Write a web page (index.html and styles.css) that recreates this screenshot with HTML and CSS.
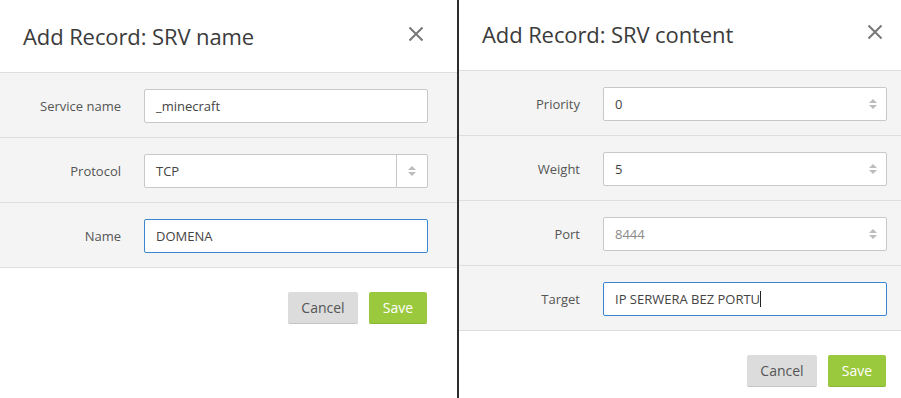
FILE: index.html
```html
<!DOCTYPE html>
<html lang="en">
<head>
  <meta charset="UTF-8" />
  <meta name="viewport" content="width=device-width, initial-scale=1.0" />
  <title>Add Record: SRV</title>
  <link rel="stylesheet" href="styles.css">
</head>
<body>

  <div class="screens">

    <!-- PASO 1: NOMBRE SRV -->
    <div class="modal">
      <div class="modal-header">
        <h2>Add Record: SRV name</h2>
        <button class="close" aria-label="Close">
          <svg width="16" height="16" viewBox="0 0 16 16"><path d="M1.5 1.5L14.5 14.5M14.5 1.5L1.5 14.5" stroke="#777" stroke-width="2" fill="none"/></svg>
        </button>
      </div>
      <div class="modal-body">
        <div class="row">
          <label>Service name</label>
          <div class="field">_minecraft</div>
        </div>
        <div class="row">
          <label>Protocol</label>
          <div class="field select">TCP<span class="select-arrows"><span class="up"></span><span class="down"></span></span></div>
        </div>
        <div class="row">
          <label>Name</label>
          <div class="field focus">DOMENA</div>
        </div>
      </div>
      <div class="modal-footer">
        <button class="btn">Cancel</button>
        <button class="btn btn-save">Save</button>
      </div>
    </div>

    <div class="divider"></div>

    <!-- PASO 2: CONTENIDO SRV -->
    <div class="modal modal-second">
      <div class="modal-header">
        <h2>Add Record: SRV content</h2>
        <button class="close" aria-label="Close">
          <svg width="16" height="16" viewBox="0 0 16 16"><path d="M1.5 1.5L14.5 14.5M14.5 1.5L1.5 14.5" stroke="#777" stroke-width="2" fill="none"/></svg>
        </button>
      </div>
      <div class="modal-body">
        <div class="row">
          <label>Priority</label>
          <div class="field number">0<span class="spin"><span class="up"></span><span class="down"></span></span></div>
        </div>
        <div class="row">
          <label>Weight</label>
          <div class="field number">5<span class="spin"><span class="up"></span><span class="down"></span></span></div>
        </div>
        <div class="row">
          <label>Port</label>
          <div class="field number placeholder">8444<span class="spin"><span class="up"></span><span class="down"></span></span></div>
        </div>
        <div class="row">
          <label>Target</label>
          <div class="field focus">IP SERWERA BEZ PORTU<span class="caret"></span></div>
        </div>
      </div>
      <div class="modal-footer">
        <button class="btn">Cancel</button>
        <button class="btn btn-save">Save</button>
      </div>
    </div>

  </div>

</body>
</html>
```

FILE: styles.css
```css
:root {
  --row-bg: #f4f4f4;
  --line: #dedede;
  --save: #9bc93e;
  --focus: #3a85cf;
}
body {
  margin: 0;
  font-family: "Open Sans", Arial, sans-serif;
  background: #fff;
  overflow: hidden;
}
.screens {
  display: flex;
  height: 398px;
  overflow: hidden;
}
.modal {
  width: 457px;
  flex-shrink: 0;
  background: #fff;
}
.modal-second {
  margin-top: -2px;
}
.divider {
  width: 2px;
  flex-shrink: 0;
  background: #2d2d2d;
}
.modal-header {
  height: 72px;
  display: flex;
  justify-content: space-between;
  align-items: center;
  padding: 0 33px 0 23px;
  border-bottom: 1px solid var(--line);
}
.modal-header h2 {
  margin: 0;
  font-size: 22px;
  font-weight: normal;
  color: #3b3b3b;
  letter-spacing: -0.1px;
}
.close {
  border: 0;
  background: none;
  padding: 0;
  width: 16px;
  height: 16px;
  margin-bottom: 5px;
  display: flex;
}
.row {
  display: flex;
  align-items: center;
  padding: 16px 29px 14px 0;
  background: var(--row-bg);
  border-bottom: 1px solid var(--line);
}
.row label {
  width: 121px;
  margin-right: 23px;
  text-align: right;
  font-size: 13px;
  color: #555;
}
.field {
  flex: 1;
  height: 34px;
  box-sizing: border-box;
  display: flex;
  align-items: center;
  padding: 0 11px;
  background: #fff;
  border: 1px solid #c8c8c8;
  border-radius: 2px;
  font-size: 13px;
  color: #444;
}
.field.focus {
  border-color: var(--focus);
}
.field.placeholder {
  color: #8a8a8a;
}
.field.number {
  justify-content: space-between;
  padding-right: 9px;
}
.select {
  justify-content: space-between;
  padding-right: 0;
}
.select-arrows {
  width: 30px;
  align-self: stretch;
  border-left: 1px solid #c8c8c8;
  display: flex;
  flex-direction: column;
  align-items: center;
  justify-content: center;
  gap: 2px;
}
.spin {
  display: flex;
  flex-direction: column;
  align-items: center;
  gap: 2px;
}
.up, .down {
  width: 0;
  height: 0;
  border-left: 4px solid transparent;
  border-right: 4px solid transparent;
}
.up {
  border-bottom: 4px solid #bcbcbc;
}
.down {
  border-top: 4px solid #bcbcbc;
}
.caret {
  width: 1px;
  height: 16px;
  background: #222;
}
.modal-footer {
  display: flex;
  justify-content: flex-end;
  gap: 11px;
  padding: 24px 30px 0 0;
}
.btn {
  width: 70px;
  height: 32px;
  padding: 0;
  border: 0;
  border-bottom: 1px solid #c4c4c4;
  border-radius: 2px;
  background: #dcdcdc;
  font-family: inherit;
  font-size: 14px;
  color: #555;
}
.btn-save {
  width: 58px;
  background: var(--save);
  border-bottom-color: #89b534;
  color: #fff;
}
```
